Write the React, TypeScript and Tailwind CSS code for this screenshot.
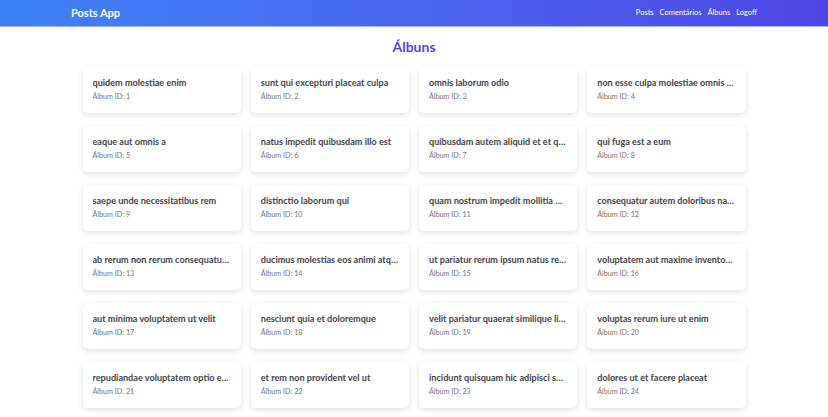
import React from "react";

const titles = [
  "quidem molestiae enim",
  "sunt qui excepturi placeat culpa",
  "omnis laborum odio",
  "non esse culpa molestiae omnis sed optio",
  "eaque aut omnis a",
  "natus impedit quibusdam illo est",
  "quibusdam autem aliquid et et quia",
  "qui fuga est a eum",
  "saepe unde necessitatibus rem",
  "distinctio laborum qui",
  "quam nostrum impedit mollitia quod et dolor",
  "consequatur autem doloribus natus consectetur",
  "ab rerum non rerum consequatur ut ea unde",
  "ducimus molestias eos animi atque nihil",
  "ut pariatur rerum ipsum natus repellendus praesentium",
  "voluptatem aut maxime inventore autem magnam",
  "aut minima voluptatem ut velit",
  "nesciunt quia et doloremque",
  "velit pariatur quaerat similique libero omnis quia",
  "voluptas rerum iure ut enim",
  "repudiandae voluptatem optio est consequatur rem in temporibus et",
  "et rem non provident vel ut",
  "incidunt quisquam hic adipisci sequi",
  "dolores ut et facere placeat",
];

export default function App() {
  return (
    <div className="min-h-screen bg-white" style={{ fontFamily: 'Lato, "Noto Sans", sans-serif' }}>
      <header className="h-[27px] bg-gradient-to-r from-[#3b82f6] to-[#4f46e5] border-b border-[#a5b4fc]">
        <div className="mx-auto w-[686px] h-full flex items-center justify-between">
          <span className="text-[11px] font-bold text-white">Posts App</span>
          <nav className="flex items-center gap-[6px] text-[7.5px] text-white">
            <span>Posts</span>
            <span>Comentários</span>
            <span>Álbuns</span>
            <span>Logoff</span>
          </nav>
        </div>
      </header>
      <main className="mx-auto w-[663px]">
        <h1 className="mt-[10px] text-center text-[14px] leading-[20px] font-bold text-[#4f46e5]">Álbuns</h1>
        <div className="mt-[10px] grid grid-cols-4 gap-x-[10px] gap-y-[13px] pb-4">
          {titles.map((t, i) => (
            <div key={i} className="h-[46px] rounded-[5px] bg-white shadow-[0_2px_6px_rgba(0,0,0,0.12)] px-[10px] pt-[9px]">
              <div className="truncate text-[9.1px] leading-[13px] font-bold text-[#3f3f46]">{t}</div>
              <div className="mt-[2px] text-[7.2px] leading-[11px] text-[#777777]">Álbum ID: {i + 1}</div>
            </div>
          ))}
        </div>
      </main>
    </div>
  );
}
